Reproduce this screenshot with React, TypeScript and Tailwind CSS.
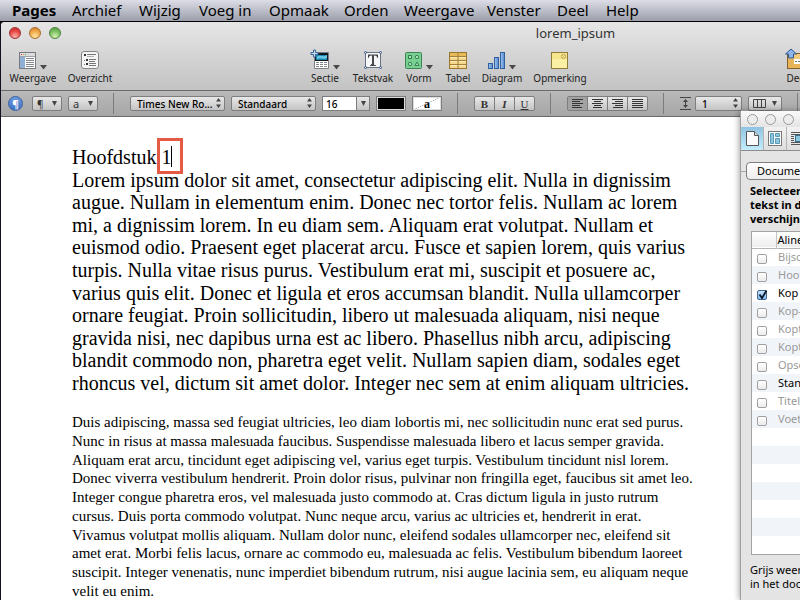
import React from 'react';

const menuItems = ['Archief', 'Wijzig', 'Voeg in', 'Opmaak', 'Orden', 'Weergave', 'Venster', 'Deel', 'Help'];

const headingLines = [
  'Lorem ipsum dolor sit amet, consectetur adipiscing elit. Nulla in dignissim',
  'augue. Nullam in elementum enim. Donec nec tortor felis. Nullam ac lorem',
  'mi, a dignissim lorem. In eu diam sem. Aliquam erat volutpat. Nullam et',
  'euismod odio. Praesent eget placerat arcu. Fusce et sapien lorem, quis varius',
  'turpis. Nulla vitae risus purus. Vestibulum erat mi, suscipit et posuere ac,',
  'varius quis elit. Donec et ligula et eros accumsan blandit. Nulla ullamcorper',
  'ornare feugiat. Proin sollicitudin, libero ut malesuada aliquam, nisi neque',
  'gravida nisi, nec dapibus urna est ac libero. Phasellus nibh arcu, adipiscing',
  'blandit commodo non, pharetra eget velit. Nullam sapien diam, sodales eget',
  'rhoncus vel, dictum sit amet dolor. Integer nec sem at enim aliquam ultricies.',
];

const bodyLines = [
  'Duis adipiscing, massa sed feugiat ultricies, leo diam lobortis mi, nec sollicitudin nunc erat sed purus.',
  'Nunc in risus at massa malesuada faucibus. Suspendisse malesuada libero et lacus semper gravida.',
  'Aliquam erat arcu, tincidunt eget adipiscing vel, varius eget turpis. Vestibulum tincidunt nisl lorem.',
  'Donec viverra vestibulum hendrerit. Proin dolor risus, pulvinar non fringilla eget, faucibus sit amet leo.',
  'Integer congue pharetra eros, vel malesuada justo commodo at. Cras dictum ligula in justo rutrum',
  'cursus. Duis porta commodo volutpat. Nunc neque arcu, varius ac ultricies et, hendrerit in erat.',
  'Vivamus volutpat mollis aliquam. Nullam dolor nunc, eleifend sodales ullamcorper nec, eleifend sit',
  'amet erat. Morbi felis lacus, ornare ac commodo eu, malesuada ac felis. Vestibulum bibendum laoreet',
  'suscipit. Integer venenatis, nunc imperdiet bibendum rutrum, nisi augue lacinia sem, eu aliquam neque',
  'velit eu enim.',
];

const paragraphStyles = [
  { name: 'Bijschrift', inUse: false },
  { name: 'Hoofdtekst', inUse: false },
  { name: 'Kop', inUse: true, checked: true },
  { name: 'Kop- en voet', inUse: false },
  { name: 'Koptekst 1', inUse: false },
  { name: 'Koptekst 2', inUse: false },
  { name: 'Opsomming', inUse: false },
  { name: 'Standaard', inUse: true },
  { name: 'Titel', inUse: false },
  { name: 'Voettekst', inUse: false },
];

const emptyRows = [0, 1, 2, 3, 4, 5, 6];

// Toolbar icons

const ViewIcon = () => (
  <svg width="18" height="19" viewBox="0 0 18 19">
    <rect x=".5" y="1.5" width="16" height="16" fill="#fff" stroke="#777b82" />
    <path d="M1 2h15v3H1z" fill="#dcdcdc" />
    <path d="M2 3h1v1H2z" fill="#d33" />
    <path d="M4 3h1v1H4z" fill="#e9a030" />
    <path d="M6 3h1v1H6z" fill="#4a4" />
    <path d="M1 5h5v12H1z" fill="#8fb0d6" />
    <path d="M1 5.5h15" stroke="#9aa3ae" />
    <path d="M7 7.5h8M7 9.5h8M7 11.5h8M7 13.5h8M7 15.5h8" stroke="#85878b" />
  </svg>
);

const OutlineIcon = () => (
  <svg width="18" height="19" viewBox="0 0 18 19">
    <rect x=".5" y=".5" width="17" height="17" rx="2.5" fill="#f4f4f4" stroke="#85878a" />
    <path d="M3 3h2v2H3zM5 8h2v2H5zM5 12h2v2H5z" fill="#333" />
    <path d="M3 9h1v1H3zM3 13h1v1H3z" fill="#777" />
    <path d="M6 3.5h9M8 8.5h7M8 10.5h6M8 12.5h7M8 14.5h7" stroke="#777" />
    <path d="M6 5.5h7" stroke="#b0b0b0" />
  </svg>
);

const SectionIcon = () => (
  <svg width="20" height="21" viewBox="0 0 20 21">
    <path d="M4.500 3.500h14v16h-14z" fill="#fff" stroke="#7b7e84" />
    <path d="M5 4h13v8H5z" fill="#101820" />
    <path d="M6 6h11v5H6z" fill="#1787ae" />
    <path d="M7 8c3-3 6 1 10-2v3c-4 2-6-1-10 1z" fill="#6ecbe5" />
    <path d="M6 13.500h3M10 13.500h3M14 13.500h3M6 15.500h3M10 15.500h3M14 15.500h3M6 17.500h3M10 17.500h3M14 17.500h3" stroke="#85888c" />
    <path d="M3.500 1h2v2.500H8v2H5.500V8h-2V5.500H1v-2h2.500z" fill="#c3dbf4" stroke="#3f6797" />
  </svg>
);

const TextBoxIcon = () => (
  <svg width="20" height="20" viewBox="0 0 20 20">
    <rect x="2.500" y="2.500" width="15" height="15" fill="#f6f6f6" stroke="#657184" />
    <path d="M5 4.500h10V8h-.7c-.3-1.700-1-2.500-3.300-2.500V14c0 1 .4 1 2 1.200v.8H7v-.8c1.600-.2 2-.2 2-1.200V5.500C6.700 5.500 6 6.300 5.700 8H5z" fill="#44474c" />
    <g fill="#dce8f8" stroke="#35537f">
      <circle cx="2.500" cy="2.500" r="1" />
      <circle cx="17.500" cy="2.500" r="1" />
      <circle cx="2.500" cy="17.500" r="1" />
      <circle cx="17.500" cy="17.500" r="1" />
    </g>
  </svg>
);

const ShapeIcon = () => (
  <svg width="18" height="19" viewBox="0 0 18 19">
    <rect x=".5" y="1.500" width="16" height="16" rx="1" fill="#77cf91" stroke="#3f8453" />
    <g fill="#a5e8b6" stroke="#3a7f52">
      <rect x="3.500" y="4.500" width="3" height="3" />
      <circle cx="12" cy="6" r="1.700" />
      <circle cx="5" cy="13" r="1.700" />
      <path d="M12 11l2 3.500h-4z" />
    </g>
  </svg>
);

const TableIcon = () => (
  <svg width="18" height="19" viewBox="0 0 18 19">
    <rect x=".5" y="1.500" width="17" height="16" fill="#f5d78b" stroke="#9a7631" />
    <path d="M1 2h16v3H1z" fill="#e7ba55" />
    <path d="M1 5.500h16M1 9.500h16M1 13.500h16M9 2v15" stroke="#a5803a" />
    <path d="M2 6.500h6M10 6.500h7M2 10.500h6M10 10.500h7M2 14.500h6M10 14.500h7" stroke="#fdedbb" />
  </svg>
);

const ChartIcon = () => (
  <svg width="18" height="19" viewBox="0 0 18 19">
    <defs>
      <linearGradient id="bar">
        <stop offset="0" stopColor="#a9cbf3" />
        <stop offset="1" stopColor="#4d83cc" />
      </linearGradient>
    </defs>
    <g fill="url(#bar)" stroke="#315f9e">
      <rect x=".5" y="12.500" width="4" height="5" />
      <rect x="6.500" y="6.500" width="4" height="11" />
      <rect x="12.500" y="1.500" width="4" height="16" />
    </g>
  </svg>
);

const NoteIcon = () => (
  <svg width="18" height="19" viewBox="0 0 18 19">
    <rect x=".5" y="1.500" width="16" height="16" fill="#fbf0a4" stroke="#8f7c3a" />
    <path d="M1 2h15v6H1z" fill="#f6e78f" />
    <circle cx="12.500" cy="5.500" r="2.200" fill="#f9efad" stroke="#c9ab4c" />
    <path d="M11 4l3 3M14 4l-3 3" stroke="#c9ab4c" strokeWidth=".8" />
  </svg>
);

const ShareIcon = () => (
  <svg width="26" height="22" viewBox="0 0 26 22">
    <rect x="3.500" y="5.500" width="21" height="15" fill="#e7b45a" stroke="#83602b" />
    <path d="M4 6h20v5H4z" fill="#f2cb7c" />
    <rect x="10" y="11" width="12" height="5" fill="#fff" />
    <path d="M11 13.500h9" stroke="#777" strokeDasharray="2 1" />
    <path d="M7 1l5.500 5H9.500v4h-5V6H1.500z" fill="#8db4ea" stroke="#31588f" />
  </svg>
);

const DownArrow = () => (
  <svg width="7" height="5" viewBox="0 0 7 5" className="shrink-0">
    <path d="M0 0h7L3.500 4.500z" fill="#4a4a4a" />
  </svg>
);

const SmallArrow = () => (
  <svg width="5" height="5" viewBox="0 0 5 5" className="shrink-0">
    <path d="M0 0h5L2.500 5z" fill="#444" />
  </svg>
);

const Stepper = () => (
  <svg width="5" height="10" viewBox="0 0 5 10" className="pointer-events-none absolute right-1 top-[2px]">
    <path d="M0 3.500L2.500 0 5 3.500zM0 6.500L2.500 10 5 6.500z" fill="#444" />
  </svg>
);

interface ToolProps {
  label: string;
  icon: React.ReactNode;
  width: string;
  menu?: boolean;
}

const Tool: React.FC<ToolProps> = ({ label, icon, width, menu }) => (
  <button className={`flex shrink-0 flex-col items-center ${width}`}>
    <span className="flex h-[22px] items-end gap-[3px]">
      {icon}
      {menu && <DownArrow />}
    </span>
    <span className="text-[10px] leading-4 text-[#222]">{label}</span>
  </button>
);

const Separator = () => <span className="mr-[10px] ml-[9px] h-[21px] w-px shrink-0 bg-[#7c7c7c]" />;

interface PopupProps {
  label: string;
  value: string;
  width: string;
}

const Popup: React.FC<PopupProps> = ({ label, value, width }) => (
  <span className={`relative h-[15px] shrink-0 ${width}`}>
    <select
      aria-label={label}
      className="block h-full w-full appearance-none rounded-[2px] border border-[#7d7d7d] bg-linear-to-b from-[#e8e8e8] to-[#c4c4c4] pl-[6px] text-[10px] leading-3 font-medium text-black"
    >
      <option>{value}</option>
    </select>
    <Stepper />
  </span>
);

const alignments = [
  { label: 'Links', d: 'M0 .5h11M0 2.500h8M0 4.500h11M0 6.500h8M0 8.500h10' },
  { label: 'Midden', d: 'M0 .5h11M2 2.500h7M0 4.500h11M2 6.500h7M1 8.500h9' },
  { label: 'Rechts', d: 'M0 .5h11M3 2.500h8M0 4.500h11M3 6.500h8M1 8.500h10' },
  { label: 'Uitvullen', d: 'M0 .5h11M0 2.500h11M0 4.500h11M0 6.500h11M0 8.500h11' },
];

const MenuBar = () => (
  <nav className="grid h-[22px] grid-cols-[60px_67px_60px_70px_75px_60px_83px_70px_49px_1fr] items-center border-b border-black bg-linear-to-b from-[#dcdde6] to-[#9c9fab] pb-px pl-3 text-[15px] leading-5 whitespace-nowrap text-black">
    <a href="#pages" className="font-bold">Pages</a>
    {menuItems.map((item) => (
      <a key={item} href="#menu">{item}</a>
    ))}
  </nav>
);

const TitleBar = () => (
  <div className="flex h-[22px] items-center pl-2">
    <div className="flex w-[342px] shrink-0 gap-2">
      <button aria-label="Sluit" className="size-3 rounded-full border border-[#9b3634] bg-[radial-gradient(circle_at_50%_85%,#ffb3ac,#e5403f_60%,#b92c2d)]" />
      <button aria-label="Minimaliseer" className="size-3 rounded-full border border-[#a8702c] bg-[radial-gradient(circle_at_50%_85%,#ffe9a3,#efa244_60%,#c47c2d)]" />
      <button aria-label="Vergroot" className="size-3 rounded-full border border-[#4e8343] bg-[radial-gradient(circle_at_50%_85%,#d5f5b0,#75bb5c_60%,#4f9641)]" />
    </div>
    <h1 className="grow text-center text-[13px] leading-5 text-[#333]">lorem_ipsum</h1>
  </div>
);

const Toolbar = () => (
  <div className="flex h-[46px] overflow-hidden pt-[4px] pl-1">
    <Tool label="Weergave" icon={<ViewIcon />} width="w-[56px]" menu />
    <Tool label="Overzicht" icon={<OutlineIcon />} width="w-[58px]" />
    <span className="w-[184px] shrink-0" />
    <Tool label="Sectie" icon={<SectionIcon />} width="w-[44px]" menu />
    <Tool label="Tekstvak" icon={<TextBoxIcon />} width="w-[52px]" />
    <Tool label="Vorm" icon={<ShapeIcon />} width="w-[40px]" menu />
    <Tool label="Tabel" icon={<TableIcon />} width="w-[38px]" />
    <Tool label="Diagram" icon={<ChartIcon />} width="w-[50px]" menu />
    <Tool label="Opmerking" icon={<NoteIcon />} width="w-[66px]" />
    <span className="grow" />
    <Tool label="Deel" icon={<ShareIcon />} width="-mr-3 w-[30px]" />
  </div>
);

const FormatBar = () => (
  <div className="flex h-[27px] items-center gap-[6px] overflow-hidden border-y border-[#6b6b6b] bg-linear-to-b from-[#b9b9b9] to-[#a6a6a6] pl-[7px]">
    <button
      aria-label="Stijlenpaneel"
      className="mr-[3px] flex size-[15px] shrink-0 items-center justify-center rounded-full border border-[#38609e] bg-linear-to-b from-[#6d9ade] to-[#3f72c6] text-[10px] leading-3 font-bold text-white"
    >
      ¶
    </button>
    <button className="flex h-[15px] w-[30px] shrink-0 items-center justify-between rounded-[2px] border border-[#7d7d7d] bg-linear-to-b from-[#e8e8e8] to-[#c4c4c4] px-1 text-[10px] leading-3 text-[#333]">
      ¶ <SmallArrow />
    </button>
    <button className="flex h-[15px] w-[30px] shrink-0 items-center justify-between rounded-[2px] border border-[#7d7d7d] bg-linear-to-b from-[#e8e8e8] to-[#c4c4c4] px-1 text-[11px] leading-3 text-[#333]">
      a <SmallArrow />
    </button>
    <Separator />
    <Popup label="Lettertype" value="Times New Ro..." width="w-[95px]" />
    <Popup label="Letterstijl" value="Standaard" width="w-[85px]" />
    <span className="flex h-[15px] w-[48px] shrink-0 border border-[#7d7d7d]">
      <input aria-label="Lettergrootte" defaultValue="16" className="w-[33px] bg-white pl-[3px] text-[10px] leading-3 font-medium" />
      <button aria-label="Kies grootte" className="flex grow items-center justify-center border-l border-[#7d7d7d] bg-linear-to-b from-[#e8e8e8] to-[#c4c4c4]">
        <SmallArrow />
      </button>
    </span>
    <button aria-label="Tekstkleur" className="h-[15px] w-[30px] shrink-0 border border-[#7d7d7d] bg-black ring-1 ring-[#ddd] ring-inset" />
    <button
      aria-label="Achtergrondkleur"
      className="h-[15px] w-[30px] shrink-0 border border-[#7d7d7d] bg-[linear-gradient(155deg,#fff_48%,#aaa_50%,#fff_52%)] font-['Liberation_Serif',serif] text-[12px] leading-3 font-bold ring-1 ring-[#ddd] ring-inset"
    >
      a
    </button>
    <Separator />
    <div className="flex h-[15px] w-[61px] shrink-0 divide-x divide-[#7d7d7d] rounded-[2px] border border-[#7d7d7d] bg-linear-to-b from-[#e8e8e8] to-[#c4c4c4] font-['Liberation_Serif',serif] text-[11px] leading-3 text-[#333]">
      <button className="flex-1 font-bold">B</button>
      <button className="flex-1 font-bold italic">I</button>
      <button className="flex-1 underline">U</button>
    </div>
    <Separator />
    <div className="flex h-[15px] w-[81px] shrink-0 divide-x divide-[#7d7d7d] rounded-[2px] border border-[#7d7d7d] bg-linear-to-b from-[#e8e8e8] to-[#c4c4c4]">
      {alignments.map(({ label, d }) => (
        <button
          key={label}
          aria-label={label}
          aria-pressed={label === 'Links'}
          className="flex flex-1 items-center justify-center aria-pressed:bg-[#a2a2a2]"
        >
          <svg width="11" height="9" viewBox="0 0 11 9">
            <path d={d} stroke="#333" />
          </svg>
        </button>
      ))}
    </div>
    <Separator />
    <div className="flex shrink-0 items-center gap-1">
      <svg width="11" height="13" viewBox="0 0 11 13">
        <path d="M0 .5h11M0 12.500h11M5.500 3v7" stroke="#444" />
        <path d="M3 5l2.500-3L8 5zM3 8l2.500 3L8 8z" fill="#444" />
      </svg>
      <Popup label="Regelafstand" value="1" width="w-[47px]" />
    </div>
    <button
      aria-label="Kolommen"
      className="flex h-[15px] w-[34px] shrink-0 items-center justify-between rounded-[2px] border border-[#7d7d7d] bg-linear-to-b from-[#e8e8e8] to-[#c4c4c4] px-1"
    >
      <svg width="13" height="9" viewBox="0 0 13 9">
        <path d="M.5 .5h12v8H.5zM4.500 0v9M8.500 0v9" fill="none" stroke="#444" />
      </svg>
      <SmallArrow />
    </button>
    <Separator />
  </div>
);

const DocumentPage = () => (
  <article className="grow bg-white pt-[29px] pl-[71px] font-['Liberation_Serif','Times_New_Roman',serif] whitespace-nowrap text-black">
    <div className="grid h-[248px] auto-rows-fr items-center text-[20px] leading-[22px]">
      <h2>
        Hoofdstuk{' '}
        <span className="relative">
          1
          <span className="absolute -top-2 -left-1 h-[36px] w-[26px] border-3 border-[#e55a45]" />
          <span className="absolute top-0 left-[10px] h-[21px] w-px bg-black" />
        </span>
      </h2>
      {headingLines.map((line) => (
        <p key={line}>{line}</p>
      ))}
    </div>
    <div className="mt-[19px] grid h-[187px] auto-rows-fr items-center text-[15px] leading-[18px]">
      {bodyLines.map((line) => (
        <p key={line}>{line}</p>
      ))}
    </div>
  </article>
);

const Inspector = () => (
  <aside className="absolute top-[111px] -right-[170px] bottom-0 w-[230px] border-l border-[#a0a0a0] bg-[#e4e4e4] text-[11px] leading-[14px] whitespace-nowrap text-black shadow-[-1px_0_6px_rgba(0,0,0,0.35)]">
    <div className="flex h-4 items-center gap-[7px] bg-linear-to-b from-[#fafafa] to-[#e4e4e4] pl-[6px]">
      <button aria-label="Sluit paneel" className="size-[11px] rounded-full border border-[#9a9a9a] bg-[#ececec]" />
      <button aria-label="Minimaliseer paneel" className="size-[11px] rounded-full border border-[#9a9a9a] bg-[#ececec]" />
      <button aria-label="Vergroot paneel" className="size-[11px] rounded-full border border-[#9a9a9a] bg-[#ececec]" />
    </div>
    <div className="flex h-6 divide-x divide-[#b4b4b4] border-b border-[#8c8c8c] bg-linear-to-b from-[#f2f2f2] to-[#dedede]">
      <button aria-label="Document" className="flex w-[23px] items-center justify-center bg-linear-to-b from-[#90c4e4] to-[#c3ecfb]">
        <svg width="13" height="15" viewBox="0 0 13 15">
          <path d="M.5 .5h8l4 4v10H.5z" fill="#fafafa" stroke="#555" />
          <path d="M8.500 .5v4h4" fill="#ddd" stroke="#555" />
        </svg>
      </button>
      <button aria-label="Lay-out" className="flex w-[23px] items-center justify-center">
        <svg width="14" height="15" viewBox="0 0 14 15">
          <rect x=".5" y=".5" width="13" height="14" fill="#fff" stroke="#777" />
          <path d="M2.500 2.500h3v10h-3zM7.500 2.500h4v3h-4zM7.500 7.500h4v5h-4z" fill="#8cc5df" stroke="#5b9ab6" />
        </svg>
      </button>
      <button aria-label="Tekstterugloop" className="flex w-[23px] items-center justify-center">
        <svg width="15" height="15" viewBox="0 0 15 15">
          <path d="M0 1.500h15M0 3.500h15M0 5.500h3M0 7.500h3M0 9.500h3M0 11.500h15M0 13.500h15" stroke="#555" />
          <rect x="4.500" y="4.500" width="6" height="6" fill="#8cc5df" stroke="#356f8a" />
        </svg>
      </button>
    </div>
    <div className="mt-[11px] flex items-center">
      <span className="h-px w-[5px] bg-[#a8a8a8]" />
      <button className="h-[18px] w-[120px] rounded-[4px] border border-[#7e7e7e] bg-linear-to-b from-white to-[#ececec] pl-[10px] text-left">
        Document
      </button>
    </div>
    <p className="mt-1 pl-[9px] font-bold">
      Selecteer
      <br />
      tekst in de
      <br />
      verschijnen
    </p>
    <div className="mt-[5px] ml-[10px] w-[210px] border border-[#a3a3a3] bg-white">
      <table className="w-full table-fixed border-collapse">
        <thead>
          <tr className="h-4 border-b border-[#b5b5b5] bg-linear-to-b from-white to-[#ededed]">
            <th className="w-6 border-r border-[#c4c4c4] p-0" />
            <th className="p-0 pl-px text-left font-normal">Alinea</th>
          </tr>
        </thead>
        <tbody>
          {paragraphStyles.map(({ name, inUse, checked }) => (
            <tr key={name} className="h-[18px] even:bg-[#f1f5fa]">
              <td className="p-0 pl-[5px]">
                <span className="relative block pt-[3px]">
                  <input
                    id={name}
                    type="checkbox"
                    defaultChecked={checked}
                    className="peer block size-[10px] appearance-none rounded-[2px] border border-[#a0a0a0] bg-linear-to-b from-white to-[#ececec] checked:border-[#44698f] checked:from-[#c5e2fa] checked:to-[#7fb9ee]"
                  />
                  <svg
                    width="11"
                    height="11"
                    viewBox="0 0 11 11"
                    className="pointer-events-none absolute top-[2px] left-0 hidden peer-checked:block"
                  >
                    <path d="M2.500 5.500l2.500 3.500L9.500 1.500" fill="none" stroke="#0b1a2c" strokeWidth="1.800" />
                  </svg>
                </span>
              </td>
              <td className="p-0 pl-[2px]">
                <label htmlFor={name} className={inUse ? 'text-black' : 'text-[#999]'}>{name}</label>
              </td>
            </tr>
          ))}
          {emptyRows.map((row) => (
            <tr key={row} className="h-[18px] even:bg-[#f1f5fa]">
              <td colSpan={2} className="p-0" />
            </tr>
          ))}
        </tbody>
      </table>
    </div>
    <p className="mt-2 pl-[9px]">
      Grijs weergegeven
      <br />
      in het document
    </p>
  </aside>
);

export default function App() {
  return (
    <div className="relative flex h-screen flex-col overflow-hidden bg-[#11121c] font-['Noto_Sans','Open_Sans',sans-serif]">
      <MenuBar />
      <main className="ml-px flex min-h-0 grow flex-col overflow-hidden rounded-tl-[4px] bg-white">
        <header className="bg-linear-to-b from-[#e6e6e6] to-[#b5b5b5]">
          <TitleBar />
          <Toolbar />
          <FormatBar />
        </header>
        <DocumentPage />
      </main>
      <Inspector />
    </div>
  );
}
